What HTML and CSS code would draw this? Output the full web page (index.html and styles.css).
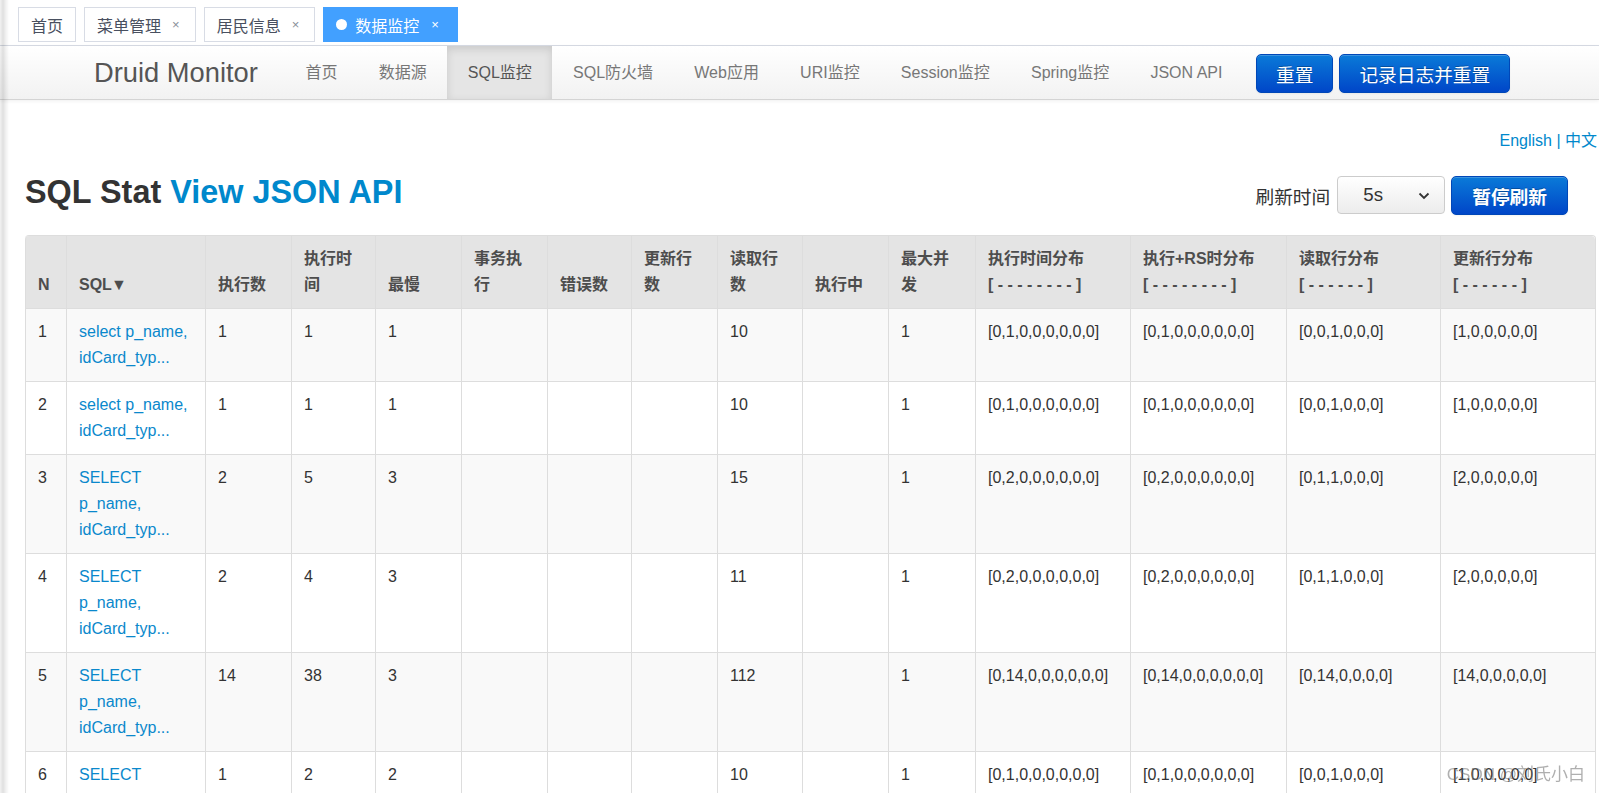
FILE: index.html
```html
<!DOCTYPE html>
<html lang="zh-CN">
<head>
<meta charset="utf-8">
<title>数据监控</title>
<link rel="stylesheet" href="styles.css">
</head>
<body>
<div class="tags-bar">
  <span class="tag">首页</span>
  <span class="tag">菜单管理<span class="tag-close">×</span></span>
  <span class="tag">居民信息<span class="tag-close">×</span></span>
  <span class="tag active"><span class="dot"></span>数据监控<span class="tag-close">×</span></span>
</div>
<div class="navbar">
  <a class="brand">Druid Monitor</a>
  <ul class="nav">
    <li><a>首页</a></li>
    <li><a>数据源</a></li>
    <li class="active"><a>SQL监控</a></li>
    <li><a>SQL防火墙</a></li>
    <li><a>Web应用</a></li>
    <li><a>URI监控</a></li>
    <li><a>Session监控</a></li>
    <li><a>Spring监控</a></li>
    <li><a>JSON API</a></li>
  </ul>
  <div class="nav-btns">
    <button class="btn">重置</button>
    <button class="btn">记录日志并重置</button>
  </div>
</div>
<div class="content">
  <div class="lang"><a>English</a> | <a>中文</a></div>
  <div class="title-row">
    <h2 class="title">SQL Stat <a>View JSON API</a></h2>
    <div class="refresh">
      <span class="refresh-label">刷新时间</span>
      <div class="select"><span>5s</span><svg width="12" height="8" viewBox="0 0 12 8"><polyline points="1.5,1.5 6,6 10.5,1.5" fill="none" stroke="#333" stroke-width="1.8"/></svg></div>
      <button class="btn bold">暂停刷新</button>
    </div>
  </div>
  <table class="stat">
    <thead>
      <tr>
        <th class="w41">N</th>
        <th class="w139">SQL<span class="arrow">▼</span></th>
        <th class="w86">执行数</th>
        <th class="w84">执行时间</th>
        <th class="w86">最慢</th>
        <th class="w86">事务执行</th>
        <th class="w84">错误数</th>
        <th class="w86">更新行数</th>
        <th class="w85">读取行数</th>
        <th class="w86">执行中</th>
        <th class="w87">最大并发</th>
        <th class="w155">执行时间分布<br>[ - - - - - - - - ]</th>
        <th class="w156">执行+RS时分布<br>[ - - - - - - - - ]</th>
        <th class="w154">读取行分布<br>[ - - - - - - ]</th>
        <th class="w155">更新行分布<br>[ - - - - - - ]</th>
      </tr>
    </thead>
    <tbody>
      <tr>
        <td>1</td><td><a>select p_name, idCard_typ...</a></td><td>1</td><td>1</td><td>1</td><td></td><td></td><td></td><td>10</td><td></td><td>1</td><td>[0,1,0,0,0,0,0,0]</td><td>[0,1,0,0,0,0,0,0]</td><td>[0,0,1,0,0,0]</td><td>[1,0,0,0,0,0]</td>
      </tr>
      <tr>
        <td>2</td><td><a>select p_name, idCard_typ...</a></td><td>1</td><td>1</td><td>1</td><td></td><td></td><td></td><td>10</td><td></td><td>1</td><td>[0,1,0,0,0,0,0,0]</td><td>[0,1,0,0,0,0,0,0]</td><td>[0,0,1,0,0,0]</td><td>[1,0,0,0,0,0]</td>
      </tr>
      <tr>
        <td>3</td><td><a>SELECT p_name, idCard_typ...</a></td><td>2</td><td>5</td><td>3</td><td></td><td></td><td></td><td>15</td><td></td><td>1</td><td>[0,2,0,0,0,0,0,0]</td><td>[0,2,0,0,0,0,0,0]</td><td>[0,1,1,0,0,0]</td><td>[2,0,0,0,0,0]</td>
      </tr>
      <tr>
        <td>4</td><td><a>SELECT p_name, idCard_typ...</a></td><td>2</td><td>4</td><td>3</td><td></td><td></td><td></td><td>11</td><td></td><td>1</td><td>[0,2,0,0,0,0,0,0]</td><td>[0,2,0,0,0,0,0,0]</td><td>[0,1,1,0,0,0]</td><td>[2,0,0,0,0,0]</td>
      </tr>
      <tr>
        <td>5</td><td><a>SELECT p_name, idCard_typ...</a></td><td>14</td><td>38</td><td>3</td><td></td><td></td><td></td><td>112</td><td></td><td>1</td><td>[0,14,0,0,0,0,0,0]</td><td>[0,14,0,0,0,0,0,0]</td><td>[0,14,0,0,0,0]</td><td>[14,0,0,0,0,0]</td>
      </tr>
      <tr>
        <td>6</td><td><a>SELECT p_name, idCard_typ...</a></td><td>1</td><td>2</td><td>2</td><td></td><td></td><td></td><td>10</td><td></td><td>1</td><td>[0,1,0,0,0,0,0,0]</td><td>[0,1,0,0,0,0,0,0]</td><td>[0,0,1,0,0,0]</td><td>[1,0,0,0,0,0]</td>
      </tr>
    </tbody>
  </table>
</div>
<div class="edge-shade"></div>
<div class="watermark">CSDN @刘氏小白</div>
</body>
</html>
```
FILE: styles.css
```css
html, body {
  margin: 0;
  padding: 0;
  overflow: hidden;
  height: 100%;
}
body {
  background: #fff;
  font-family: "Liberation Sans", Arial, "Noto Sans CJK SC", sans-serif;
  color: #333;
}
a { cursor: pointer; }

/* top tags */
.tags-bar {
  height: 45px;
  border-bottom: 1px solid #d8dce5;
  display: flex;
  align-items: center;
  gap: 8px;
  padding-left: 18px;
  box-sizing: content-box;
}
.tag {
  height: 35px;
  box-sizing: border-box;
  border: 1px solid #d8dce5;
  display: inline-flex;
  align-items: center;
  padding: 0 12px;
  font-size: 16px;
  color: #495060;
  background: #fff;
  margin-top: 4px;
}
.tag-close {
  font-size: 13px;
  color: #8a8f99;
  margin-left: 11px;
  margin-right: 3px;
}
.tag.active {
  background: #42a0ff;
  border-color: #42a0ff;
  color: #fff;
  padding-right: 14px;
}
.tag.active .tag-close { color: #fff; margin-left: 12px; margin-right: 4px; }
.dot {
  width: 11px;
  height: 11px;
  border-radius: 50%;
  background: #fff;
  margin-right: 8px;
}

/* druid navbar */
.navbar {
  height: 53px;
  border-bottom: 1px solid #d4d4d4;
  background: linear-gradient(to bottom, #ffffff, #f2f2f2);
  box-shadow: 0 1px 4px rgba(0,0,0,0.065);
  display: flex;
  align-items: center;
  padding-left: 94px;
}
.brand {
  font-size: 27.3px;
  color: #555;
  margin-right: 27px;
  line-height: 53px;
}
.nav {
  list-style: none;
  margin: 0;
  padding: 0;
  display: flex;
  height: 53px;
}
.nav li a {
  display: block;
  line-height: 53px;
  padding: 0 20.6px;
  font-size: 16px;
  color: #777;
}
.nav li.active a {
  background: #e5e5e5;
  color: #555;
  box-shadow: inset 0 3px 8px rgba(0,0,0,0.125);
  padding: 0 20.6px;
}
.nav-btns {
  display: flex;
  gap: 6px;
  margin-left: 13px;
  margin-top: 2px;
}
.btn {
  height: 39px;
  padding: 0 19px;
  font-family: "Liberation Sans", "Noto Sans CJK SC", sans-serif;
  font-size: 18.7px;
  color: #fff;
  border: 1px solid #0047b8;
  border-radius: 5px;
  background: linear-gradient(to bottom, #0a7ad8, #0046c8);
  text-shadow: 0 -1px 0 rgba(0,0,0,0.25);
  box-shadow: inset 0 1px 0 rgba(255,255,255,0.2), 0 1px 2px rgba(0,0,0,0.05);
}
.btn.bold { font-weight: bold; padding: 0 20px; }

/* content */
.content {
  padding: 0 2px 0 25px;
}
.lang {
  margin-top: 30px;
  text-align: right;
  font-size: 16px;
  line-height: 22px;
  color: #0088cc;
}
.lang a { color: #0088cc; }
.title-row {
  display: flex;
  justify-content: space-between;
  align-items: center;
  margin-top: 20px;
  margin-right: 29px;
}
.title {
  margin: 0;
  font-size: 32.4px;
  font-weight: bold;
  line-height: 40px;
  padding-bottom: 6px;
  color: #333;
}
.title a { color: #0088cc; }
.refresh {
  display: flex;
  align-items: center;
}
.refresh-label {
  font-size: 18.7px;
  color: #333;
  margin-right: 7px;
}
.select {
  width: 108px;
  height: 38px;
  box-sizing: border-box;
  border: 1px solid #ccc;
  border-radius: 4px;
  background: linear-gradient(to bottom, #fff, #ececec);
  display: flex;
  align-items: center;
  justify-content: space-between;
  padding: 0 14px 0 25px;
  font-size: 18.7px;
  color: #333;
  margin-right: 6px;
}
.select svg { margin-top: 1px; }

/* table */
.stat {
  margin-top: 17px;
  table-layout: fixed;
  width: 1571px;
  border-collapse: separate;
  border-spacing: 0;
  border: 1px solid #ddd;
  border-left: 0;
  border-radius: 4px;
  font-size: 16px;
  line-height: 26px;
}
.stat th, .stat td {
  box-sizing: border-box;
  padding: 10px 12px;
  border-left: 1px solid #ddd;
  text-align: left;
  overflow: hidden;
}
.stat th {
  background: #e4e4e4;
  color: #4d4d4d;
  font-weight: bold;
  vertical-align: bottom;
}
.arrow {
  font-size: 16px;
  margin-left: -1px;
}
.stat thead tr th:first-child { border-top-left-radius: 4px; }
.stat thead tr th:last-child { border-top-right-radius: 4px; }
.stat td {
  border-top: 1px solid #ddd;
  vertical-align: top;
  color: #333;
}
.stat tbody tr:nth-child(odd) td { background: #f9f9f9; }
.stat td a { color: #0a88cc; }

.w41 { width: 41px; }
.w84 { width: 84px; }
.w85 { width: 85px; }
.w86 { width: 86px; }
.w87 { width: 87px; }
.w139 { width: 139px; }
.w154 { width: 154px; }
.w155 { width: 155px; }
.w156 { width: 156px; }

/* overlays */
.edge-shade {
  position: fixed;
  left: 0;
  top: 0;
  bottom: 0;
  width: 9px;
  pointer-events: none;
  background: linear-gradient(to right, rgba(0,0,0,0.05) 0, rgba(0,0,0,0.12) 3px, rgba(0,0,0,0.05) 6px, rgba(0,0,0,0) 9px);
}
.watermark {
  position: fixed;
  right: 14px;
  bottom: 8px;
  font-size: 17px;
  color: rgba(110,110,110,0.55);
  font-family: "Liberation Sans", "Noto Sans CJK SC", sans-serif;
  pointer-events: none;
}
```
